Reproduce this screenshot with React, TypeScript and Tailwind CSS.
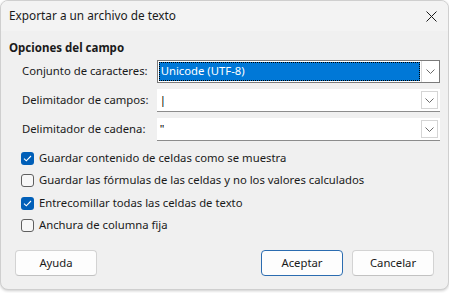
import React from "react";

const font = { fontFamily: '"Segoe UI", "Noto Sans", "Liberation Sans", sans-serif' };

function Chevron() {
  return (
    <svg width="9" height="5" viewBox="0 0 9 5" fill="none">
      <path d="M0.5 0.5 L4.5 4.5 L8.5 0.5" stroke="#6b6b6b" strokeWidth="1" />
    </svg>
  );
}

function Combo({ value, focused }: { value: string; focused?: boolean }) {
  if (focused) {
    return (
      <div className="flex h-[23px] w-[284px] border border-[#7a7a7a] bg-white">
        <div className="m-px flex flex-1 items-center border border-dotted border-black bg-[#0078d7] pl-px text-[11.3px] text-white">
          {value}
        </div>
        <div className="flex w-[18px] items-center justify-center border-l border-[#d9d9d9] bg-white">
          <Chevron />
        </div>
      </div>
    );
  }
  return (
    <div className="flex h-[23px] w-[284px] border-b border-[#8c8c8c] bg-white">
      <div className="flex flex-1 items-center pl-[3px] text-[11.3px] text-black">{value}</div>
      <div className="mr-[2px] mt-[2px] flex h-[18px] w-[17px] items-center justify-center border border-[#d5d5d5] bg-white">
        <Chevron />
      </div>
    </div>
  );
}

function Check({ checked, label }: { checked?: boolean; label: string }) {
  return (
    <div className="flex h-[22.4px] items-center gap-[5px]">
      {checked ? (
        <div className="flex h-[13px] w-[13px] items-center justify-center rounded-[3px] bg-[#005fb8]">
          <svg width="9" height="7" viewBox="0 0 9 7" fill="none">
            <path d="M1 3.6 L3.3 5.8 L8 1" stroke="white" strokeWidth="1.1" />
          </svg>
        </div>
      ) : (
        <div className="h-[13px] w-[13px] rounded-[3px] border border-[#5f5f5f] bg-[#f7f7f7]" />
      )}
      <span className="text-[11.3px] text-[#1a1a1a]">{label}</span>
    </div>
  );
}

function Btn({ label, primary }: { label: string; primary?: boolean }) {
  return (
    <div
      className={
        "flex h-[26px] w-[82px] items-center justify-center rounded-[4px] bg-[#fdfdfd] text-[11.3px] text-[#1a1a1a] " +
        (primary ? "border border-[#2b6cb0]" : "border border-[#d3d3d3] border-b-[#c2c2c2]")
      }
    >
      {label}
    </div>
  );
}

export default function App() {
  return (
    <div className="h-[293px] w-[449px] bg-white" style={font}>
      <div className="flex h-[290px] w-[449px] flex-col overflow-hidden rounded-[8px] border border-[#cfcfcf] bg-[#f0f0f0] shadow-[0_1px_3px_rgba(0,0,0,0.2)]">
        <div className="flex h-[30px] items-center justify-between bg-[#f3f3f3] pl-[8px] pr-[11px] text-[11.8px] text-[#1a1a1a]">
          <span>Exportar a un archivo de texto</span>
          <svg width="11" height="11" viewBox="0 0 11 11" fill="none">
            <path d="M0.5 0.5 L10.5 10.5 M10.5 0.5 L0.5 10.5" stroke="#1a1a1a" strokeWidth="1" />
          </svg>
        </div>
        <div className="flex flex-1 flex-col px-[8px]">
          <div className="mt-[8px] text-[11.5px] font-bold text-[#1a1a1a]">Opciones del campo</div>
          <div className="mt-[4px] flex flex-col gap-[6px] pl-[13px]">
            <div className="flex items-center">
              <span className="w-[135px] text-[11.3px] text-[#1a1a1a]">Conjunto de caracteres:</span>
              <Combo value="Unicode (UTF-8)" focused />
            </div>
            <div className="flex items-center">
              <span className="w-[135px] text-[11.3px] text-[#1a1a1a]">Delimitador de campos:</span>
              <Combo value="|" />
            </div>
            <div className="flex items-center">
              <span className="w-[135px] text-[11.3px] text-[#1a1a1a]">Delimitador de cadena:</span>
              <Combo value={'"'} />
            </div>
          </div>
          <div className="mt-[6px] flex flex-col pl-[12px]">
            <Check checked label="Guardar contenido de celdas como se muestra" />
            <Check label="Guardar las fórmulas de las celdas y no los valores calculados" />
            <Check checked label="Entrecomillar todas las celdas de texto" />
            <Check label="Anchura de columna fija" />
          </div>
          <div className="mt-auto mb-[13px] flex items-center px-[6px]">
            <Btn label="Ayuda" />
            <div className="flex-1" />
            <div className="flex gap-[9px]">
              <Btn label="Aceptar" primary />
              <Btn label="Cancelar" />
            </div>
          </div>
        </div>
      </div>
    </div>
  );
}
